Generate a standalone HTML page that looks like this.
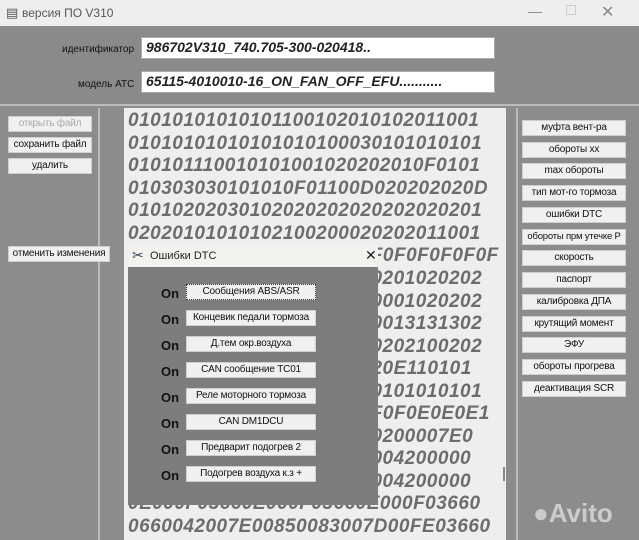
<!DOCTYPE html>
<html><head><meta charset="utf-8"><style>
*{margin:0;padding:0;box-sizing:border-box}
body{width:639px;height:540px;overflow:hidden;background:#8c8c8c;font-family:"Liberation Sans","DejaVu Sans",sans-serif;position:relative}
.abs{position:absolute}
.title{left:0;top:0;width:639px;height:26px;background:#eeeeee;font-size:12px;color:#555}
.top{left:0;top:26px;width:639px;height:80px;background:#8a8a8a;border-bottom:2px solid #bdbdbd}
.lbl{font-size:10px;color:#111}
.tb{background:#fff;border:1px solid #aaa;font-weight:bold;font-style:italic;font-size:14px;color:#222;padding:1px 4px}
.btn{background:#f0f0f0;border:1px solid #cfcfcf;font-size:10px;color:#111;text-align:center;line-height:14px;height:16px;white-space:nowrap;overflow:hidden;letter-spacing:-0.2px}
.txt{left:124px;top:108px;width:382px;height:432px;background:#eeeeee;overflow:hidden}
.txt div{position:absolute;left:4px;font-weight:bold;font-style:italic;font-size:19px;letter-spacing:0.5px;color:#6c6c6c;white-space:nowrap}
.rp{left:516px;top:108px;width:123px;height:432px;background:#8c8c8c;border-left:2px solid #bbb}
.dlg{left:128px;top:245px;width:250px;height:260px;background:#7d7d7d}
.dt{left:0;top:0;width:250px;height:22px;background:#f4f2ee;font-size:11px;color:#222}
.on{font-weight:bold;font-size:13px;color:#111}
</style></head><body>
<div class="abs title"><span class="abs" style="left:6px;top:5px;font-size:13px">▤</span><span class="abs" style="left:22px;top:6px">версия ПО V310</span><span class="abs" style="left:528px;top:3px;font-size:14px;color:#888">—</span><span class="abs" style="left:566px;top:5px;width:10px;height:10px;border:1px solid #ccc"></span><span class="abs" style="left:601px;top:2px;font-size:16px;color:#888">✕</span></div>
<div class="abs top"></div>
<div class="abs lbl" style="left:62px;top:44px">идентификатор</div>
<div class="abs tb" style="left:141px;top:37px;width:354px;height:22px">986702V310_740.705-300-020418..</div>
<div class="abs lbl" style="left:78px;top:79px">модель АТС</div>
<div class="abs tb" style="left:141px;top:71px;width:354px;height:22px">65115-4010010-16_ON_FAN_OFF_EFU...........</div>
<div class="abs" style="left:0;top:108px;width:100px;height:432px;background:#8c8c8c;border-right:2px solid #bbb"></div>
<div class="abs btn" style="left:8px;top:116px;width:84px;color:#aaa">открыть файл</div>
<div class="abs btn" style="left:8px;top:137px;width:84px">сохранить файл</div>
<div class="abs btn" style="left:8px;top:158px;width:84px">удалить</div>
<div class="abs btn" style="left:8px;top:246px;width:102px">отменить изменения</div>
<div class="abs txt">
<div style="top:2px">01010101010101100102010102011001</div>
<div style="top:25px">01010101010101010100030101010101</div>
<div style="top:47px">010101110010101001020202010F0101</div>
<div style="top:70px">010303030101010F01100D020202020D</div>
<div style="top:92px">01010202030102020202020202020201</div>
<div style="top:115px">02020101010102100200020202011001</div>
<div style="top:137px">0F0F0F0F0F0F0F0F0F0F0F0F0F0F0F0F</div>
<div style="top:160px">02020202020202020202010201020202</div>
<div style="top:183px">02020202020202020202000001020202</div>
<div style="top:205px">02020202020202020202000013131302</div>
<div style="top:228px">02020202020202020202000202100202</div>
<div style="top:250px">020202020202020202020120E110101</div>
<div style="top:273px">01010101010101010101010101010101</div>
<div style="top:295px">0F0F0F0F0F0F0F0F0F0F0F0F0E0E0E1</div>
<div style="top:318px">02020202020202020202020200007E0</div>
<div style="top:340px">0420000006004200000600004200000</div>
<div style="top:363px">0420000006004200000600004200000</div>
<div style="top:385px">0E000F03660E000F03660E000F03660</div>
<div style="top:408px">0660042007E00850083007D00FE03660</div>
</div>
<div class="abs" style="left:503px;top:467px;width:2px;height:14px;background:#888"></div>
<div class="abs rp"></div>
<div class="abs" style="left:533px;top:498px;font-size:26px;font-weight:bold;color:#ddd;opacity:.8">●Avito</div>
<div class="abs btn" style="left:522px;top:120px;width:104px">муфта вент-ра</div>
<div class="abs btn" style="left:522px;top:142px;width:104px">обороты хх</div>
<div class="abs btn" style="left:522px;top:163px;width:104px">max обороты</div>
<div class="abs btn" style="left:522px;top:185px;width:104px">тип мот-го тормоза</div>
<div class="abs btn" style="left:522px;top:207px;width:104px">ошибки DTC</div>
<div class="abs btn" style="left:522px;top:229px;width:104px;font-size:9.5px">обороты прм утечке Р</div>
<div class="abs btn" style="left:522px;top:250px;width:104px">скорость</div>
<div class="abs btn" style="left:522px;top:272px;width:104px">паспорт</div>
<div class="abs btn" style="left:522px;top:294px;width:104px">калибровка ДПА</div>
<div class="abs btn" style="left:522px;top:316px;width:104px">крутящий момент</div>
<div class="abs btn" style="left:522px;top:337px;width:104px">ЭФУ</div>
<div class="abs btn" style="left:522px;top:359px;width:104px">обороты прогрева</div>
<div class="abs btn" style="left:522px;top:381px;width:104px">деактивация SCR</div>
<div class="abs dlg">
<div class="abs dt"><span class="abs" style="left:4px;top:2px;font-size:14px;color:#345">✂</span><span class="abs" style="left:22px;top:5px">Ошибки DTC</span><span class="abs" style="left:237px;top:2px;font-size:14px">✕</span></div>
<div class="abs on" style="left:33px;top:41px">On</div><div class="abs btn" style="left:58px;top:39px;width:130px;border:1px dotted #333">Сообщения ABS/ASR</div>
<div class="abs on" style="left:33px;top:67px">On</div><div class="abs btn" style="left:58px;top:65px;width:130px">Концевик педали тормоза</div>
<div class="abs on" style="left:33px;top:93px">On</div><div class="abs btn" style="left:58px;top:91px;width:130px">Д.тем окр.воздуха</div>
<div class="abs on" style="left:33px;top:119px">On</div><div class="abs btn" style="left:58px;top:117px;width:130px">CAN сообщение TC01</div>
<div class="abs on" style="left:33px;top:145px">On</div><div class="abs btn" style="left:58px;top:143px;width:130px">Реле моторного тормоза</div>
<div class="abs on" style="left:33px;top:171px">On</div><div class="abs btn" style="left:58px;top:169px;width:130px">CAN DM1DCU</div>
<div class="abs on" style="left:33px;top:197px">On</div><div class="abs btn" style="left:58px;top:195px;width:130px">Предварит подогрев 2</div>
<div class="abs on" style="left:33px;top:223px">On</div><div class="abs btn" style="left:58px;top:221px;width:130px">Подогрев воздуха к.з +</div>
</div>
</body></html>
